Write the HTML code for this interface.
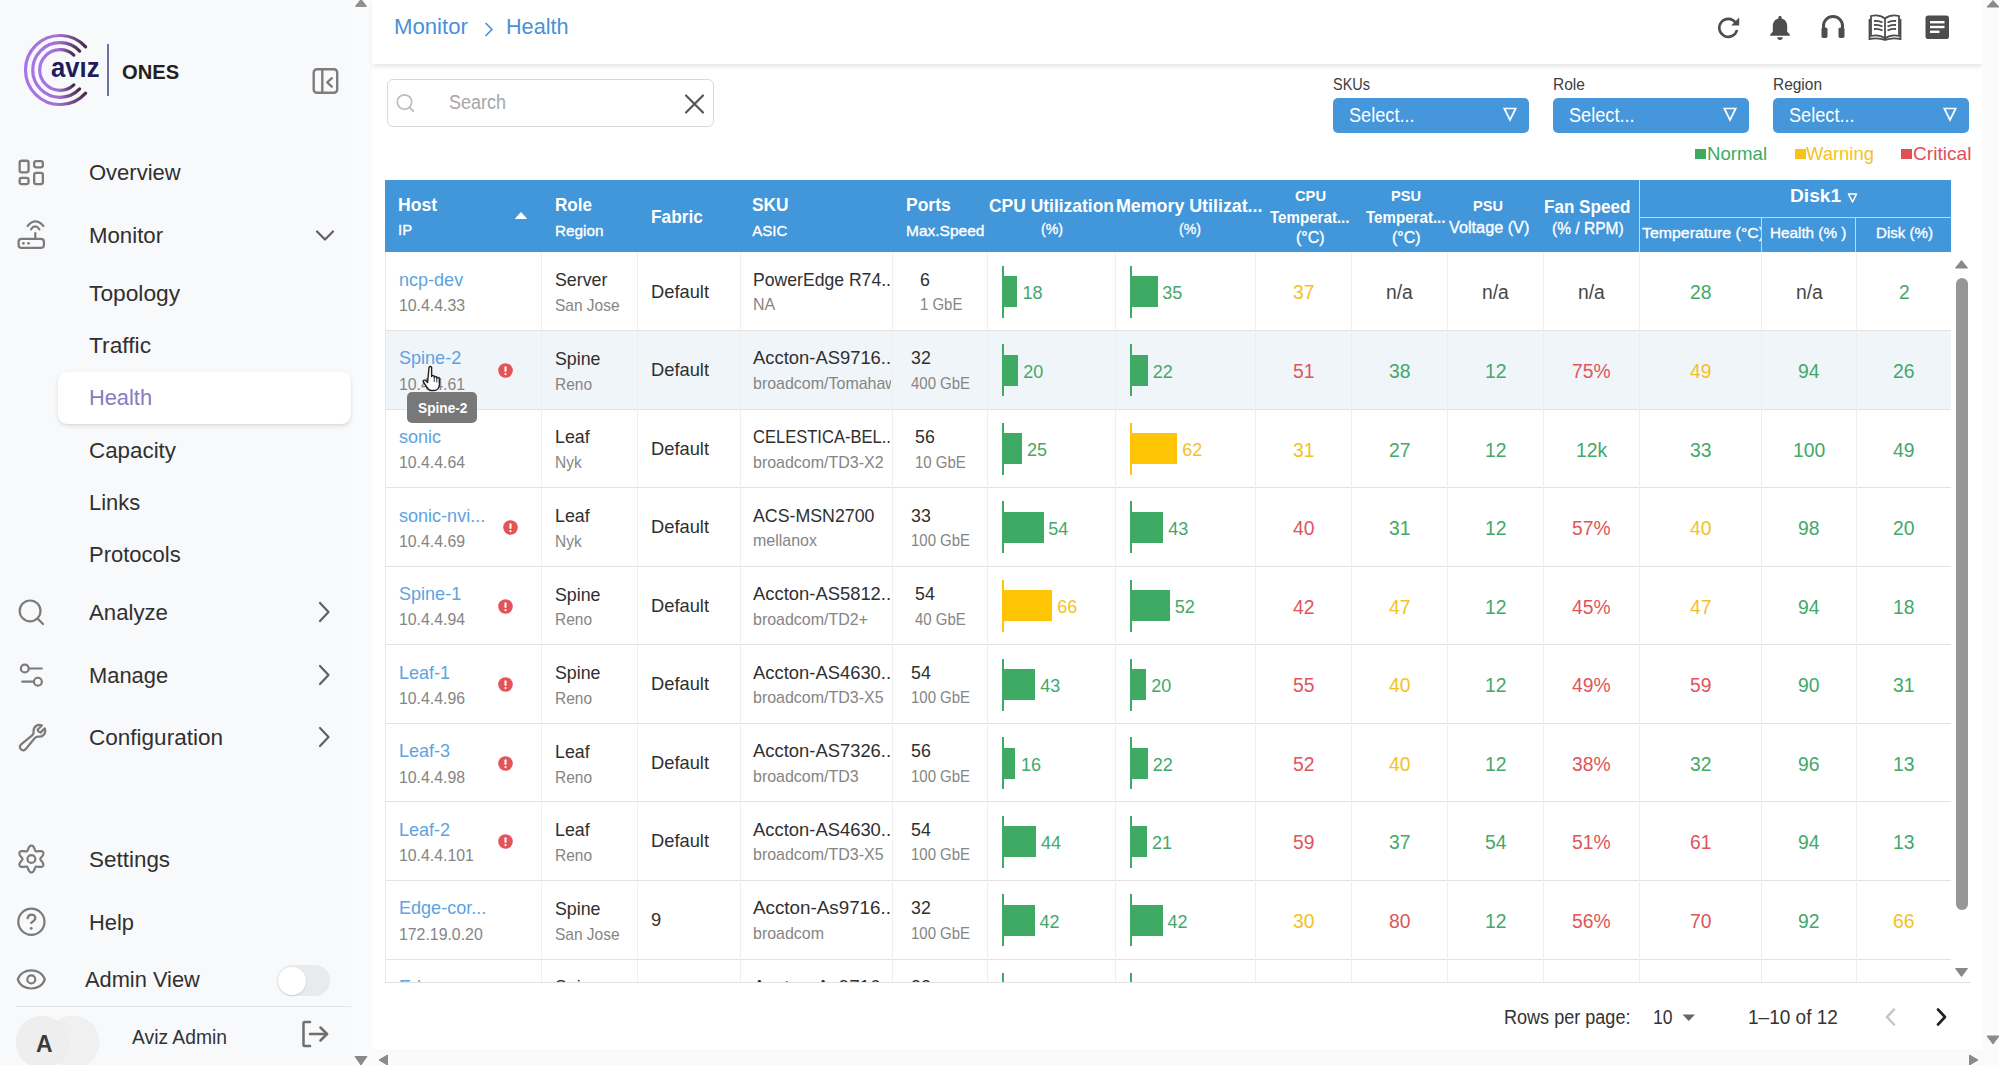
<!DOCTYPE html><html><head><meta charset="utf-8"><style>
html,body{margin:0;padding:0;}
body{width:1999px;height:1065px;overflow:hidden;position:relative;background:#fff;font-family:"Liberation Sans",sans-serif;}
.a{position:absolute;}
.t{position:absolute;white-space:nowrap;}
</style></head><body>
<div class="a" style="left:0px;top:0px;width:353px;height:1065px;background:#f8f9fb;"></div>
<div class="a" style="left:353px;top:0px;width:19px;height:1065px;background:#fafbfc;"></div>
<svg class="a" style="left:354px;top:-1px" width="14" height="9" viewBox="0 0 14 9"><path d="M2 7.2 L7 1 L12 7.2 Z" fill="#8f8f8f" stroke="#8f8f8f" stroke-linejoin="round" stroke-width="1.6"/></svg>
<svg class="a" style="left:354px;top:1056px" width="14" height="9" viewBox="0 0 14 9"><path d="M1 0.5 L13 0.5 L7 9 Z" fill="#8a8a8a" stroke="#8a8a8a" stroke-linejoin="round" stroke-width="1"/></svg>
<svg class="a" style="left:0px;top:0px" width="120" height="120" viewBox="0 0 120 120"><defs><linearGradient id="lg" x1="0" y1="0" x2="1" y2="0"><stop offset="0" stop-color="#a874e8"/><stop offset="0.55" stop-color="#a070d0"/><stop offset="1" stop-color="#4a2a48"/></linearGradient></defs><path d="M85.64 46.91 A34.5 34.5 0 1 0 85.64 93.09" fill="none" stroke="url(#lg)" stroke-width="3.2" stroke-linecap="round"/><path d="M79.64 51.04 A27.3 27.3 0 1 0 79.64 88.96" fill="none" stroke="url(#lg)" stroke-width="3.2" stroke-linecap="round"/><path d="M73.84 55.15 A20.3 20.3 0 1 0 73.84 84.85" fill="none" stroke="url(#lg)" stroke-width="3.2" stroke-linecap="round"/></svg>
<div class="t " style="left:50.50px;top:55.34px;font-size:27px;line-height:27px;color:#1f1b5c;font-weight:700;transform:scaleX(0.9504);transform-origin:0 0;">av&#305;z</div>
<div class="a" style="left:107px;top:44px;width:2px;height:52px;background:#6b72a8;"></div>
<div class="t " style="left:122.00px;top:62.07px;font-size:20px;line-height:20px;color:#231f20;font-weight:700;transform:scaleX(1.0071);transform-origin:0 0;">ONES</div>
<svg class="a" style="left:310px;top:66px" width="30" height="31" viewBox="0 0 30 31"><rect x="3.7" y="3.2" width="23.5" height="23.6" rx="3.2" fill="none" stroke="#7d7d7d" stroke-width="2.4"/><line x1="12.3" y1="3.2" x2="12.3" y2="26.8" stroke="#7d7d7d" stroke-width="2.4"/><path d="M21.8 12.2 L17.2 16.3 L21.8 20.6" fill="none" stroke="#7d7d7d" stroke-width="2.3" stroke-linecap="round" stroke-linejoin="round"/></svg>
<svg class="a" style="left:10px;top:150px" width="50" height="50" viewBox="0 0 50 50"><g fill="none" stroke="#7b7b7b" stroke-width="2.3"><rect x="9.65" y="10.75" width="8.9" height="11.6" rx="2"/><rect x="24.15" y="11.05" width="8.7" height="6.3" rx="2"/><rect x="9.65" y="27.95" width="8.9" height="6.1" rx="2"/><rect x="24.15" y="22.95" width="8.7" height="11.1" rx="2"/></g></svg>
<div class="t " style="left:89.00px;top:162.08px;font-size:22px;line-height:22px;color:#303030;">Overview</div>
<svg class="a" style="left:10px;top:210px" width="50" height="50" viewBox="0 0 50 50"><g fill="none" stroke="#7b7b7b" stroke-width="2.2" stroke-linecap="round"><rect x="8.6" y="28.8" width="25.3" height="9.1" rx="3"/><line x1="25.3" y1="23" x2="25.3" y2="28.5"/><path d="M17.6 16 Q25.4 6.8 33.4 16"/><path d="M21 19.3 Q25.2 13.6 29.4 19.3"/></g><circle cx="13.4" cy="33.3" r="1.4" fill="#7b7b7b"/><circle cx="18.5" cy="33.3" r="1.4" fill="#7b7b7b"/></svg>
<div class="t " style="left:89.00px;top:225.08px;font-size:22px;line-height:22px;color:#303030;transform:scaleX(1.0101);transform-origin:0 0;">Monitor</div>
<svg class="a" style="left:314px;top:227px" width="22" height="18" viewBox="0 0 22 18"><path d="M3 4.5 L11 12.5 L19 4.5" fill="none" stroke="#606060" stroke-width="2.2" stroke-linecap="round" stroke-linejoin="round"/></svg>
<div class="a" style="left:58px;top:372px;width:293px;height:52px;background:#fff;border-radius:9px;box-shadow:0 2px 4px rgba(0,0,0,0.10),0 1px 2px rgba(0,0,0,0.05);"></div>
<div class="t " style="left:89.00px;top:283.08px;font-size:22px;line-height:22px;color:#303030;transform:scaleX(1.0341);transform-origin:0 0;">Topology</div>
<div class="t " style="left:89.00px;top:335.28px;font-size:22px;line-height:22px;color:#303030;transform:scaleX(1.0361);transform-origin:0 0;">Traffic</div>
<div class="t " style="left:89.00px;top:387.48px;font-size:22px;line-height:22px;color:#857cc0;transform:scaleX(0.9909);transform-origin:0 0;">Health</div>
<div class="t " style="left:89.00px;top:440.08px;font-size:22px;line-height:22px;color:#303030;transform:scaleX(1.0166);transform-origin:0 0;">Capacity</div>
<div class="t " style="left:89.00px;top:491.68px;font-size:22px;line-height:22px;color:#303030;transform:scaleX(0.9949);transform-origin:0 0;">Links</div>
<div class="t " style="left:89.00px;top:543.78px;font-size:22px;line-height:22px;color:#303030;">Protocols</div>
<svg class="a" style="left:10px;top:590px" width="50" height="50" viewBox="0 0 50 50"><g fill="none" stroke="#7b7b7b" stroke-width="2.2" stroke-linecap="round"><circle cx="20.1" cy="20.9" r="10.4"/><line x1="28" y1="28.9" x2="33" y2="34"/></g></svg>
<div class="t " style="left:89.00px;top:602.18px;font-size:22px;line-height:22px;color:#303030;transform:scaleX(1.0087);transform-origin:0 0;">Analyze</div>
<svg class="a" style="left:315px;top:600px" width="20" height="24" viewBox="0 0 20 24"><path d="M5 3 L13.5 12 L5 21" fill="none" stroke="#606060" stroke-width="2.2" stroke-linecap="round" stroke-linejoin="round"/></svg>
<svg class="a" style="left:10px;top:650px" width="50" height="50" viewBox="0 0 50 50"><g fill="none" stroke="#7b7b7b" stroke-width="2.2" stroke-linecap="round"><circle cx="14.8" cy="18.5" r="3.95"/><line x1="18.75" y1="18.5" x2="31.8" y2="18.5"/><circle cx="27.9" cy="31.7" r="3.95"/><line x1="12.2" y1="31.7" x2="23.95" y2="31.7"/></g></svg>
<div class="t " style="left:89.00px;top:664.78px;font-size:22px;line-height:22px;color:#303030;transform:scaleX(0.9947);transform-origin:0 0;">Manage</div>
<svg class="a" style="left:315px;top:663px" width="20" height="24" viewBox="0 0 20 24"><path d="M5 3 L13.5 12 L5 21" fill="none" stroke="#606060" stroke-width="2.2" stroke-linecap="round" stroke-linejoin="round"/></svg>
<svg class="a" style="left:16.7px;top:721.5px" width="32" height="32" viewBox="0 0 32 32"><g transform="scale(1.3)"><path d="M21.75 6.75a4.5 4.5 0 0 1-4.884 4.484c-1.076-.091-2.264.071-2.95.904l-7.152 8.684a2.548 2.548 0 1 1-3.586-3.586l8.684-7.152c.833-.686.995-1.874.904-2.95a4.5 4.5 0 0 1 6.336-4.486l-3.276 3.276a3.004 3.004 0 0 0 2.25 2.25l3.276-3.276c.211.465.329.98.329 1.521Z" fill="none" stroke="#7b7b7b" stroke-width="1.7" stroke-linejoin="round" stroke-linecap="round"/></g></svg>
<div class="t " style="left:89.00px;top:727.28px;font-size:22px;line-height:22px;color:#303030;transform:scaleX(1.0237);transform-origin:0 0;">Configuration</div>
<svg class="a" style="left:315px;top:725px" width="20" height="24" viewBox="0 0 20 24"><path d="M5 3 L13.5 12 L5 21" fill="none" stroke="#606060" stroke-width="2.2" stroke-linecap="round" stroke-linejoin="round"/></svg>
<svg class="a" style="left:10px;top:834px" width="50" height="50" viewBox="0 0 50 50"><path d="M21.40 11.50 L21.64 11.51 L21.87 11.56 L22.10 11.63 L22.33 11.73 L22.55 11.86 L22.77 12.01 L22.97 12.19 L23.17 12.38 L23.36 12.60 L23.54 12.84 L23.72 13.09 L23.88 13.35 L24.03 13.62 L24.17 13.90 L24.30 14.18 L24.42 14.46 L24.53 14.75 L24.64 15.02 L24.74 15.29 L24.84 15.56 L24.93 15.81 L25.02 16.04 L25.11 16.26 L25.20 16.47 L25.29 16.65 L25.39 16.82 L25.49 16.97 L25.60 17.10 L25.72 17.20 L25.85 17.29 L25.99 17.36 L26.14 17.41 L26.31 17.44 L26.49 17.46 L26.68 17.46 L26.89 17.44 L27.11 17.42 L27.35 17.39 L27.60 17.35 L27.86 17.30 L28.13 17.25 L28.42 17.20 L28.71 17.16 L29.01 17.12 L29.32 17.08 L29.63 17.05 L29.94 17.04 L30.25 17.03 L30.56 17.04 L30.86 17.06 L31.15 17.10 L31.44 17.16 L31.71 17.23 L31.97 17.32 L32.21 17.43 L32.43 17.56 L32.63 17.71 L32.81 17.87 L32.96 18.05 L33.09 18.25 L33.20 18.46 L33.28 18.69 L33.33 18.92 L33.35 19.17 L33.36 19.42 L33.33 19.69 L33.28 19.96 L33.21 20.23 L33.12 20.50 L33.01 20.78 L32.87 21.05 L32.73 21.32 L32.57 21.59 L32.40 21.85 L32.22 22.10 L32.03 22.35 L31.85 22.59 L31.66 22.82 L31.48 23.04 L31.30 23.25 L31.13 23.46 L30.97 23.66 L30.82 23.84 L30.69 24.02 L30.57 24.20 L30.48 24.37 L30.40 24.53 L30.34 24.69 L30.31 24.84 L30.30 25.00 L30.31 25.16 L30.34 25.31 L30.40 25.47 L30.48 25.63 L30.57 25.80 L30.69 25.98 L30.82 26.16 L30.97 26.34 L31.13 26.54 L31.30 26.75 L31.48 26.96 L31.66 27.18 L31.85 27.41 L32.03 27.65 L32.22 27.90 L32.40 28.15 L32.57 28.41 L32.73 28.68 L32.87 28.95 L33.01 29.22 L33.12 29.50 L33.21 29.77 L33.28 30.04 L33.33 30.31 L33.36 30.58 L33.35 30.83 L33.33 31.08 L33.28 31.31 L33.20 31.54 L33.09 31.75 L32.96 31.95 L32.81 32.13 L32.63 32.29 L32.43 32.44 L32.21 32.57 L31.97 32.68 L31.71 32.77 L31.44 32.84 L31.15 32.90 L30.86 32.94 L30.56 32.96 L30.25 32.97 L29.94 32.96 L29.63 32.95 L29.32 32.92 L29.01 32.88 L28.71 32.84 L28.42 32.80 L28.13 32.75 L27.86 32.70 L27.60 32.65 L27.35 32.61 L27.11 32.58 L26.89 32.56 L26.68 32.54 L26.49 32.54 L26.31 32.56 L26.14 32.59 L25.99 32.64 L25.85 32.71 L25.72 32.80 L25.60 32.90 L25.49 33.03 L25.39 33.18 L25.29 33.35 L25.20 33.53 L25.11 33.74 L25.02 33.96 L24.93 34.19 L24.84 34.44 L24.74 34.71 L24.64 34.98 L24.53 35.25 L24.42 35.54 L24.30 35.82 L24.17 36.10 L24.03 36.38 L23.88 36.65 L23.72 36.91 L23.54 37.16 L23.36 37.40 L23.17 37.62 L22.97 37.81 L22.77 37.99 L22.55 38.14 L22.33 38.27 L22.10 38.37 L21.87 38.44 L21.64 38.49 L21.40 38.50 L21.16 38.49 L20.93 38.44 L20.70 38.37 L20.47 38.27 L20.25 38.14 L20.03 37.99 L19.83 37.81 L19.63 37.62 L19.44 37.40 L19.26 37.16 L19.08 36.91 L18.92 36.65 L18.77 36.38 L18.63 36.10 L18.50 35.82 L18.38 35.54 L18.27 35.25 L18.16 34.98 L18.06 34.71 L17.96 34.44 L17.87 34.19 L17.78 33.96 L17.69 33.74 L17.60 33.53 L17.51 33.35 L17.41 33.18 L17.31 33.03 L17.20 32.90 L17.08 32.80 L16.95 32.71 L16.81 32.64 L16.66 32.59 L16.49 32.56 L16.31 32.54 L16.12 32.54 L15.91 32.56 L15.69 32.58 L15.45 32.61 L15.20 32.65 L14.94 32.70 L14.67 32.75 L14.38 32.80 L14.09 32.84 L13.79 32.88 L13.48 32.92 L13.17 32.95 L12.86 32.96 L12.55 32.97 L12.24 32.96 L11.94 32.94 L11.65 32.90 L11.36 32.84 L11.09 32.77 L10.83 32.68 L10.59 32.57 L10.37 32.44 L10.17 32.29 L9.99 32.13 L9.84 31.95 L9.71 31.75 L9.60 31.54 L9.52 31.31 L9.47 31.08 L9.45 30.83 L9.44 30.58 L9.47 30.31 L9.52 30.04 L9.59 29.77 L9.68 29.50 L9.79 29.22 L9.93 28.95 L10.07 28.68 L10.23 28.41 L10.40 28.15 L10.58 27.90 L10.77 27.65 L10.95 27.41 L11.14 27.18 L11.32 26.96 L11.50 26.75 L11.67 26.54 L11.83 26.34 L11.98 26.16 L12.11 25.98 L12.23 25.80 L12.32 25.63 L12.40 25.47 L12.46 25.31 L12.49 25.16 L12.50 25.00 L12.49 24.84 L12.46 24.69 L12.40 24.53 L12.32 24.37 L12.23 24.20 L12.11 24.02 L11.98 23.84 L11.83 23.66 L11.67 23.46 L11.50 23.25 L11.32 23.04 L11.14 22.82 L10.95 22.59 L10.77 22.35 L10.58 22.10 L10.40 21.85 L10.23 21.59 L10.07 21.32 L9.93 21.05 L9.79 20.78 L9.68 20.50 L9.59 20.23 L9.52 19.96 L9.47 19.69 L9.44 19.42 L9.45 19.17 L9.47 18.92 L9.52 18.69 L9.60 18.46 L9.71 18.25 L9.84 18.05 L9.99 17.87 L10.17 17.71 L10.37 17.56 L10.59 17.43 L10.83 17.32 L11.09 17.23 L11.36 17.16 L11.65 17.10 L11.94 17.06 L12.24 17.04 L12.55 17.03 L12.86 17.04 L13.17 17.05 L13.48 17.08 L13.79 17.12 L14.09 17.16 L14.38 17.20 L14.67 17.25 L14.94 17.30 L15.20 17.35 L15.45 17.39 L15.69 17.42 L15.91 17.44 L16.12 17.46 L16.31 17.46 L16.49 17.44 L16.66 17.41 L16.81 17.36 L16.95 17.29 L17.08 17.20 L17.20 17.10 L17.31 16.97 L17.41 16.82 L17.51 16.65 L17.60 16.47 L17.69 16.26 L17.78 16.04 L17.87 15.81 L17.96 15.56 L18.06 15.29 L18.16 15.02 L18.27 14.75 L18.38 14.46 L18.50 14.18 L18.63 13.90 L18.77 13.62 L18.92 13.35 L19.08 13.09 L19.26 12.84 L19.44 12.60 L19.63 12.38 L19.83 12.19 L20.03 12.01 L20.25 11.86 L20.47 11.73 L20.70 11.63 L20.93 11.56 L21.16 11.51 L21.40 11.50 Z" fill="none" stroke="#7b7b7b" stroke-width="2.2" stroke-linejoin="round"/><circle cx="21.4" cy="25" r="3.95" fill="none" stroke="#7b7b7b" stroke-width="2.2"/></svg>
<div class="t " style="left:89.00px;top:849.08px;font-size:22px;line-height:22px;color:#303030;transform:scaleX(1.0199);transform-origin:0 0;">Settings</div>
<svg class="a" style="left:10px;top:896px" width="50" height="50" viewBox="0 0 50 50"><circle cx="21.4" cy="25.8" r="13.1" fill="none" stroke="#7b7b7b" stroke-width="2.2"/><path d="M17.6 22.2 C18.2 19.6 20 18.6 21.5 18.6 C23.7 18.6 25.3 20.2 25.3 22.1 C25.3 24.3 23.4 25.5 21.2 26.9" fill="none" stroke="#7b7b7b" stroke-width="2.3" stroke-linecap="round"/><circle cx="21.2" cy="32.4" r="1.45" fill="#7b7b7b"/></svg>
<div class="t " style="left:89.00px;top:911.98px;font-size:22px;line-height:22px;color:#303030;transform:scaleX(0.9929);transform-origin:0 0;">Help</div>
<svg class="a" style="left:10px;top:955px" width="50" height="50" viewBox="0 0 50 50"><path d="M7.8 24.4 C11.5 12.3 31.1 12.3 34.8 24.4 C31.1 36.5 11.5 36.5 7.8 24.4 Z" fill="none" stroke="#7b7b7b" stroke-width="2.2" stroke-linejoin="round"/><circle cx="21.3" cy="24.4" r="3.95" fill="none" stroke="#7b7b7b" stroke-width="2.2"/></svg>
<div class="t " style="left:84.50px;top:969.08px;font-size:22px;line-height:22px;color:#303030;transform:scaleX(0.9919);transform-origin:0 0;">Admin View</div>
<div class="a" style="left:277px;top:965px;width:53px;height:31px;background:#e9eaec;border-radius:16px;"></div>
<div class="a" style="left:278px;top:966.5px;width:28px;height:28px;background:#fff;border-radius:50%;box-shadow:0 1px 2px rgba(0,0,0,0.14);"></div>
<div class="a" style="left:16px;top:1006px;width:335px;height:1px;background:#e3e4e6;"></div>
<div class="a" style="left:47px;top:1016px;width:52px;height:52px;background:#f0f0f1;border-radius:50%;box-shadow:0 0 1px rgba(0,0,0,0.08);"></div>
<div class="a" style="left:16px;top:1016px;width:52px;height:52px;background:#eeeeef;border-radius:50%;box-shadow:0 0 1px rgba(0,0,0,0.08);"></div>
<div class="t " style="left:35.50px;top:1033.03px;font-size:23px;line-height:23px;color:#3a3a3a;font-weight:700;transform:scaleX(0.9964);transform-origin:0 0;">A</div>
<div class="t " style="left:131.50px;top:1027.07px;font-size:20px;line-height:20px;color:#333;transform:scaleX(0.9635);transform-origin:0 0;">Aviz Admin</div>
<svg class="a" style="left:300px;top:1019px" width="32" height="30" viewBox="0 0 32 30"><g fill="none" stroke="#6f6f6f" stroke-width="2.5" stroke-linecap="round" stroke-linejoin="round"><path d="M10 3 H4.5 Q3.5 3 3.5 4 V26 Q3.5 27 4.5 27 H10"/><line x1="10" y1="15" x2="27" y2="15"/><path d="M20.5 8.5 L27 15 L20.5 21.5"/></g></svg>
<div class="a" style="left:372px;top:0px;width:1611px;height:1065px;background:#fff;"></div>
<div class="a" style="left:372px;top:0px;width:1611px;height:64px;background:#fff;box-shadow:0 3px 5px -1px rgba(0,0,0,0.12);"></div>
<div class="t " style="left:393.70px;top:15.98px;font-size:22px;line-height:22px;color:#4a91d6;transform:scaleX(1.0074);transform-origin:0 0;">Monitor</div>
<svg class="a" style="left:482px;top:21px" width="14" height="16" viewBox="0 0 14 16"><path d="M4 2.5 L10 8.5 L4 14.5" fill="none" stroke="#4a91d6" stroke-width="1.7" stroke-linecap="round" stroke-linejoin="round"/></svg>
<div class="t " style="left:506.20px;top:15.98px;font-size:22px;line-height:22px;color:#4a91d6;transform:scaleX(0.9830);transform-origin:0 0;">Health</div>
<svg class="a" style="left:1715px;top:14px" width="28" height="26" viewBox="0 0 28 26"><path d="M20.5 8.5 A9 9 0 1 0 22 16" fill="none" stroke="#4d4d4d" stroke-width="2.6"/><path d="M24.2 3.5 V11.5 H16.2 Z" fill="#4d4d4d"/></svg>
<svg class="a" style="left:1768px;top:14px" width="24" height="27" viewBox="0 0 24 27"><path d="M12 2 c1 0 1.6 .7 1.6 1.6 v.8 c3.6 .9 5.6 4 5.6 7.6 v5.8 l2.6 2.6 v1.3 H2.2 v-1.3 l2.6 -2.6 v-5.8 c0 -3.6 2 -6.7 5.6 -7.6 v-.8 C10.4 2.7 11 2 12 2 Z M9.3 23.3 h5.4 a2.7 2.7 0 0 1 -5.4 0 Z" fill="#4d4d4d"/></svg>
<svg class="a" style="left:1819px;top:12px" width="28" height="28" viewBox="0 0 28 28"><path d="M4.5 18 V14 a9.5 9.5 0 0 1 19 0 V18" fill="none" stroke="#4d4d4d" stroke-width="3"/><rect x="2.5" y="15.5" width="6" height="10.5" rx="1.8" fill="#4d4d4d"/><rect x="19.5" y="15.5" width="6" height="10.5" rx="1.8" fill="#4d4d4d"/></svg>
<svg class="a" style="left:1867px;top:13px" width="36" height="28" viewBox="0 0 36 28"><g fill="none" stroke="#4d4d4d" stroke-width="1.8"><path d="M18 5.5 C14 2.5 8 2 4 3 V23 C8 22 14 22.5 18 25.5 C22 22.5 28 22 32 23 V3 C28 2 22 2.5 18 5.5 Z"/><path d="M18 5.5 V25.5"/><path d="M2.5 6 V26 C8 25 14 25.5 18 27 C22 25.5 28 25 33.5 26 V6"/><path d="M7 8 C10 7.5 13 8 15.5 9.5 M7 12 C10 11.5 13 12 15.5 13.5 M7 16 C10 15.5 13 16 15.5 17.5 M20.5 9.5 C23 8 26 7.5 29 8 M20.5 13.5 C23 12 26 11.5 29 12 M20.5 17.5 C23 16 26 15.5 29 16"/></g></svg>
<svg class="a" style="left:1924px;top:14px" width="27" height="26" viewBox="0 0 27 26"><rect x="1.5" y="1.5" width="23.5" height="23.5" rx="2.8" fill="#4d4d4d"/><rect x="6" y="7" width="14.5" height="2.4" fill="#fff"/><rect x="6" y="11.8" width="14.5" height="2.4" fill="#fff"/><rect x="6" y="16.6" width="9.5" height="2.4" fill="#fff"/></svg>
<div class="a" style="left:387px;top:79px;width:327px;height:48px;box-sizing:border-box;border:1.3px solid #d9d9d9;border-radius:6px;background:#fff;"></div>
<svg class="a" style="left:394px;top:92px" width="22" height="22" viewBox="0 0 22 22"><circle cx="10.5" cy="10" r="7.2" fill="none" stroke="#bdbdbd" stroke-width="1.7"/><line x1="15.6" y1="15.3" x2="19.3" y2="19" stroke="#bdbdbd" stroke-width="1.8" stroke-linecap="round"/></svg>
<div class="t " style="left:448.50px;top:91.77px;font-size:20px;line-height:20px;color:#a6a6a6;transform:scaleX(0.8991);transform-origin:0 0;">Search</div>
<svg class="a" style="left:683px;top:93px" width="23" height="22" viewBox="0 0 23 22"><path d="M3 2.5 L20 19.5 M20 2.5 L3 19.5" stroke="#555" stroke-width="2.2" stroke-linecap="round"/></svg>
<div class="t " style="left:1333.00px;top:76.66px;font-size:16px;line-height:16px;color:#3d3d3d;transform:scaleX(0.9033);transform-origin:0 0;">SKUs</div>
<div class="a" style="left:1333px;top:98px;width:196px;height:35px;background:#4596db;border-radius:5px;"></div>
<div class="t " style="left:1349.00px;top:105.47px;font-size:20px;line-height:20px;color:#fff;transform:scaleX(0.9072);transform-origin:0 0;">Select...</div>
<svg class="a" style="left:1502px;top:106px" width="16" height="16" viewBox="0 0 16 16"><path d="M2.3 2.5 L13.7 2.5 L8 14 Z" fill="none" stroke="#fff" stroke-width="1.7" stroke-linejoin="miter"/></svg>
<div class="t " style="left:1552.50px;top:76.66px;font-size:16px;line-height:16px;color:#3d3d3d;transform:scaleX(0.9709);transform-origin:0 0;">Role</div>
<div class="a" style="left:1553px;top:98px;width:196px;height:35px;background:#4596db;border-radius:5px;"></div>
<div class="t " style="left:1569.00px;top:105.47px;font-size:20px;line-height:20px;color:#fff;transform:scaleX(0.9072);transform-origin:0 0;">Select...</div>
<svg class="a" style="left:1722px;top:106px" width="16" height="16" viewBox="0 0 16 16"><path d="M2.3 2.5 L13.7 2.5 L8 14 Z" fill="none" stroke="#fff" stroke-width="1.7" stroke-linejoin="miter"/></svg>
<div class="t " style="left:1772.50px;top:76.66px;font-size:16px;line-height:16px;color:#3d3d3d;transform:scaleX(0.9661);transform-origin:0 0;">Region</div>
<div class="a" style="left:1773px;top:98px;width:196px;height:35px;background:#4596db;border-radius:5px;"></div>
<div class="t " style="left:1789.00px;top:105.47px;font-size:20px;line-height:20px;color:#fff;transform:scaleX(0.9072);transform-origin:0 0;">Select...</div>
<svg class="a" style="left:1942px;top:106px" width="16" height="16" viewBox="0 0 16 16"><path d="M2.3 2.5 L13.7 2.5 L8 14 Z" fill="none" stroke="#fff" stroke-width="1.7" stroke-linejoin="miter"/></svg>
<div class="a" style="left:1695px;top:148.5px;width:10.5px;height:10.5px;background:#3daa62;"></div>
<div class="t " style="left:1707.00px;top:143.92px;font-size:19px;line-height:19px;color:#3daa62;transform:scaleX(0.9807);transform-origin:0 0;">Normal</div>
<div class="a" style="left:1795px;top:148.5px;width:10.5px;height:10.5px;background:#f6c21c;"></div>
<div class="t " style="left:1806.00px;top:143.92px;font-size:19px;line-height:19px;color:#f6c21c;transform:scaleX(0.9699);transform-origin:0 0;">Warning</div>
<div class="a" style="left:1901px;top:148.5px;width:10.5px;height:10.5px;background:#e14f56;"></div>
<div class="t " style="left:1912.50px;top:143.92px;font-size:19px;line-height:19px;color:#e14f56;transform:scaleX(1.0062);transform-origin:0 0;">Critical</div>
<div class="a" style="left:385px;top:252px;width:1586px;height:730px;overflow:hidden;background:#fff;">
<div class="a" style="left:0px;top:78px;width:1566px;height:1px;background:#e3e3e3;"></div>
<div class="a" style="left:156px;top:0.0px;width:1px;height:78.56px;background:#efefef;"></div>
<div class="a" style="left:252px;top:0.0px;width:1px;height:78.56px;background:#efefef;"></div>
<div class="a" style="left:355px;top:0.0px;width:1px;height:78.56px;background:#efefef;"></div>
<div class="a" style="left:507px;top:0.0px;width:1px;height:78.56px;background:#efefef;"></div>
<div class="a" style="left:602px;top:0.0px;width:1px;height:78.56px;background:#efefef;"></div>
<div class="a" style="left:730px;top:0.0px;width:1px;height:78.56px;background:#efefef;"></div>
<div class="a" style="left:870px;top:0.0px;width:1px;height:78.56px;background:#efefef;"></div>
<div class="a" style="left:966px;top:0.0px;width:1px;height:78.56px;background:#efefef;"></div>
<div class="a" style="left:1061.5px;top:0.0px;width:1px;height:78.56px;background:#efefef;"></div>
<div class="a" style="left:1158px;top:0.0px;width:1px;height:78.56px;background:#efefef;"></div>
<div class="a" style="left:1253.5px;top:0.0px;width:1px;height:78.56px;background:#efefef;"></div>
<div class="a" style="left:1376px;top:0.0px;width:1px;height:78.56px;background:#efefef;"></div>
<div class="a" style="left:1470.5px;top:0.0px;width:1px;height:78.56px;background:#efefef;"></div>
<div class="t " style="left:13.60px;top:18.84px;font-size:18.5px;line-height:18.5px;color:#5ca3e3;transform:scaleX(0.9750);transform-origin:0 0;">ncp-dev</div>
<div class="t " style="left:14.30px;top:45.21px;font-size:17px;line-height:17px;color:#858585;transform:scaleX(0.9320);transform-origin:0 0;">10.4.4.33</div>
<div class="t " style="left:169.80px;top:19.34px;font-size:18.5px;line-height:18.5px;color:#2f2f2f;transform:scaleX(0.9620);transform-origin:0 0;">Server</div>
<div class="t " style="left:169.80px;top:45.21px;font-size:17px;line-height:17px;color:#858585;transform:scaleX(0.9100);transform-origin:0 0;">San Jose</div>
<div class="t " style="left:266.00px;top:30.54px;font-size:18.5px;line-height:18.5px;color:#2f2f2f;transform:scaleX(0.9900);transform-origin:0 0;">Default</div>
<div class="a" style="left:367px;top:0.00px;width:139px;height:78.56px;overflow:hidden;">
<div class="t " style="left:0.80px;top:18.84px;font-size:18.5px;line-height:18.5px;color:#2f2f2f;transform:scaleX(0.9515);transform-origin:0 0;">PowerEdge R74..</div>
<div class="t " style="left:0.80px;top:44.41px;font-size:17px;line-height:17px;color:#858585;transform:scaleX(0.9400);transform-origin:0 0;">NA</div>
</div>
<div class="t " style="left:534.63px;top:18.84px;font-size:18.5px;line-height:18.5px;color:#2f2f2f;transform:scaleX(0.9600);transform-origin:0 0;">6</div>
<div class="t " style="left:534.63px;top:44.41px;font-size:17px;line-height:17px;color:#858585;transform:scaleX(0.8800);transform-origin:0 0;">1 GbE</div>
<div class="a" style="left:616.6px;top:13.8px;width:2px;height:52px;background:#3faa64;"></div>
<div class="a" style="left:616.6px;top:24.2px;width:15.4px;height:31px;background:#3faa64;"></div>
<div class="t " style="left:637.50px;top:32.16px;font-size:18px;line-height:18px;color:#43a869;">18</div>
<div class="a" style="left:744.6px;top:13.8px;width:2px;height:52px;background:#3faa64;"></div>
<div class="a" style="left:744.6px;top:24.2px;width:28.0px;height:31px;background:#3faa64;"></div>
<div class="t " style="left:777.30px;top:32.16px;font-size:18px;line-height:18px;color:#43a869;">35</div>
<div class="t " style="left:908.09px;top:31.49px;font-size:19.5px;line-height:19.5px;color:#f4c125;transform:scaleX(0.9900);transform-origin:0 0;">37</div>
<div class="t " style="left:1001.13px;top:31.49px;font-size:19.5px;line-height:19.5px;color:#474747;transform:scaleX(0.9900);transform-origin:0 0;">n/a</div>
<div class="t " style="left:1097.13px;top:31.49px;font-size:19.5px;line-height:19.5px;color:#474747;transform:scaleX(0.9900);transform-origin:0 0;">n/a</div>
<div class="t " style="left:1193.13px;top:31.49px;font-size:19.5px;line-height:19.5px;color:#474747;transform:scaleX(0.9900);transform-origin:0 0;">n/a</div>
<div class="t " style="left:1304.84px;top:31.49px;font-size:19.5px;line-height:19.5px;color:#43a869;transform:scaleX(0.9900);transform-origin:0 0;">28</div>
<div class="t " style="left:1410.63px;top:31.49px;font-size:19.5px;line-height:19.5px;color:#474747;transform:scaleX(0.9900);transform-origin:0 0;">n/a</div>
<div class="t " style="left:1513.64px;top:31.49px;font-size:19.5px;line-height:19.5px;color:#43a869;transform:scaleX(0.9900);transform-origin:0 0;">2</div>
<div class="a" style="left:0px;top:78.56px;width:1566px;height:78.56px;background:#f0f5fa;"></div>
<div class="a" style="left:0px;top:157px;width:1566px;height:1px;background:#e3e3e3;"></div>
<div class="a" style="left:156px;top:78.56px;width:1px;height:78.56px;background:#efefef;"></div>
<div class="a" style="left:252px;top:78.56px;width:1px;height:78.56px;background:#efefef;"></div>
<div class="a" style="left:355px;top:78.56px;width:1px;height:78.56px;background:#efefef;"></div>
<div class="a" style="left:507px;top:78.56px;width:1px;height:78.56px;background:#efefef;"></div>
<div class="a" style="left:602px;top:78.56px;width:1px;height:78.56px;background:#efefef;"></div>
<div class="a" style="left:730px;top:78.56px;width:1px;height:78.56px;background:#efefef;"></div>
<div class="a" style="left:870px;top:78.56px;width:1px;height:78.56px;background:#efefef;"></div>
<div class="a" style="left:966px;top:78.56px;width:1px;height:78.56px;background:#efefef;"></div>
<div class="a" style="left:1061.5px;top:78.56px;width:1px;height:78.56px;background:#efefef;"></div>
<div class="a" style="left:1158px;top:78.56px;width:1px;height:78.56px;background:#efefef;"></div>
<div class="a" style="left:1253.5px;top:78.56px;width:1px;height:78.56px;background:#efefef;"></div>
<div class="a" style="left:1376px;top:78.56px;width:1px;height:78.56px;background:#efefef;"></div>
<div class="a" style="left:1470.5px;top:78.56px;width:1px;height:78.56px;background:#efefef;"></div>
<div class="t " style="left:13.60px;top:97.40px;font-size:18.5px;line-height:18.5px;color:#5ca3e3;transform:scaleX(0.9750);transform-origin:0 0;">Spine-2</div>
<div class="t " style="left:14.30px;top:123.77px;font-size:17px;line-height:17px;color:#858585;transform:scaleX(0.9320);transform-origin:0 0;">10.4.4.61</div>
<div class="t " style="left:169.80px;top:97.90px;font-size:18.5px;line-height:18.5px;color:#2f2f2f;transform:scaleX(0.9620);transform-origin:0 0;">Spine</div>
<div class="t " style="left:169.80px;top:123.77px;font-size:17px;line-height:17px;color:#858585;transform:scaleX(0.9100);transform-origin:0 0;">Reno</div>
<div class="t " style="left:266.00px;top:109.10px;font-size:18.5px;line-height:18.5px;color:#2f2f2f;transform:scaleX(0.9900);transform-origin:0 0;">Default</div>
<div class="a" style="left:367px;top:78.56px;width:139px;height:78.56px;overflow:hidden;">
<div class="t " style="left:0.80px;top:18.84px;font-size:18.5px;line-height:18.5px;color:#2f2f2f;transform:scaleX(0.9946);transform-origin:0 0;">Accton-AS9716..</div>
<div class="t " style="left:0.80px;top:44.41px;font-size:17px;line-height:17px;color:#858585;transform:scaleX(0.9400);transform-origin:0 0;">broadcom/Tomahawk</div>
</div>
<div class="t " style="left:526.25px;top:97.40px;font-size:18.5px;line-height:18.5px;color:#2f2f2f;transform:scaleX(0.9600);transform-origin:0 0;">32</div>
<div class="t " style="left:526.25px;top:122.97px;font-size:17px;line-height:17px;color:#858585;transform:scaleX(0.8800);transform-origin:0 0;">400 GbE</div>
<div class="a" style="left:616.6px;top:92.36px;width:2px;height:52px;background:#3faa64;"></div>
<div class="a" style="left:616.6px;top:102.76px;width:16.9px;height:31px;background:#3faa64;"></div>
<div class="t " style="left:638.20px;top:110.72px;font-size:18px;line-height:18px;color:#43a869;">20</div>
<div class="a" style="left:744.6px;top:92.36px;width:2px;height:52px;background:#3faa64;"></div>
<div class="a" style="left:744.6px;top:102.76px;width:18.4px;height:31px;background:#3faa64;"></div>
<div class="t " style="left:767.70px;top:110.72px;font-size:18px;line-height:18px;color:#43a869;">22</div>
<div class="t " style="left:908.09px;top:110.05px;font-size:19.5px;line-height:19.5px;color:#e0545a;transform:scaleX(0.9900);transform-origin:0 0;">51</div>
<div class="t " style="left:1003.84px;top:110.05px;font-size:19.5px;line-height:19.5px;color:#43a869;transform:scaleX(0.9900);transform-origin:0 0;">38</div>
<div class="t " style="left:1099.84px;top:110.05px;font-size:19.5px;line-height:19.5px;color:#43a869;transform:scaleX(0.9900);transform-origin:0 0;">12</div>
<div class="t " style="left:1187.24px;top:110.05px;font-size:19.5px;line-height:19.5px;color:#e0545a;transform:scaleX(0.9900);transform-origin:0 0;">75%</div>
<div class="t " style="left:1304.84px;top:110.05px;font-size:19.5px;line-height:19.5px;color:#f4c125;transform:scaleX(0.9900);transform-origin:0 0;">49</div>
<div class="t " style="left:1413.34px;top:110.05px;font-size:19.5px;line-height:19.5px;color:#43a869;transform:scaleX(0.9900);transform-origin:0 0;">94</div>
<div class="t " style="left:1508.34px;top:110.05px;font-size:19.5px;line-height:19.5px;color:#43a869;transform:scaleX(0.9900);transform-origin:0 0;">26</div>
<svg class="a" style="left:113.00px;top:111.06px" width="15" height="15" viewBox="0 0 15 15"><circle cx="7.5" cy="7.5" r="7.3" fill="#e35459"/><rect x="6.5" y="3.3" width="2" height="5.6" rx="1" fill="#fff"/><circle cx="7.5" cy="11.1" r="1.1" fill="#fff"/></svg>
<div class="a" style="left:0px;top:235px;width:1566px;height:1px;background:#e3e3e3;"></div>
<div class="a" style="left:156px;top:157.12px;width:1px;height:78.56px;background:#efefef;"></div>
<div class="a" style="left:252px;top:157.12px;width:1px;height:78.56px;background:#efefef;"></div>
<div class="a" style="left:355px;top:157.12px;width:1px;height:78.56px;background:#efefef;"></div>
<div class="a" style="left:507px;top:157.12px;width:1px;height:78.56px;background:#efefef;"></div>
<div class="a" style="left:602px;top:157.12px;width:1px;height:78.56px;background:#efefef;"></div>
<div class="a" style="left:730px;top:157.12px;width:1px;height:78.56px;background:#efefef;"></div>
<div class="a" style="left:870px;top:157.12px;width:1px;height:78.56px;background:#efefef;"></div>
<div class="a" style="left:966px;top:157.12px;width:1px;height:78.56px;background:#efefef;"></div>
<div class="a" style="left:1061.5px;top:157.12px;width:1px;height:78.56px;background:#efefef;"></div>
<div class="a" style="left:1158px;top:157.12px;width:1px;height:78.56px;background:#efefef;"></div>
<div class="a" style="left:1253.5px;top:157.12px;width:1px;height:78.56px;background:#efefef;"></div>
<div class="a" style="left:1376px;top:157.12px;width:1px;height:78.56px;background:#efefef;"></div>
<div class="a" style="left:1470.5px;top:157.12px;width:1px;height:78.56px;background:#efefef;"></div>
<div class="t " style="left:13.60px;top:175.96px;font-size:18.5px;line-height:18.5px;color:#5ca3e3;transform:scaleX(0.9750);transform-origin:0 0;">sonic</div>
<div class="t " style="left:14.30px;top:202.33px;font-size:17px;line-height:17px;color:#858585;transform:scaleX(0.9320);transform-origin:0 0;">10.4.4.64</div>
<div class="t " style="left:169.80px;top:176.46px;font-size:18.5px;line-height:18.5px;color:#2f2f2f;transform:scaleX(0.9620);transform-origin:0 0;">Leaf</div>
<div class="t " style="left:169.80px;top:202.33px;font-size:17px;line-height:17px;color:#858585;transform:scaleX(0.9100);transform-origin:0 0;">Nyk</div>
<div class="t " style="left:266.00px;top:187.66px;font-size:18.5px;line-height:18.5px;color:#2f2f2f;transform:scaleX(0.9900);transform-origin:0 0;">Default</div>
<div class="a" style="left:367px;top:157.12px;width:139px;height:78.56px;overflow:hidden;">
<div class="t " style="left:0.80px;top:18.84px;font-size:18.5px;line-height:18.5px;color:#2f2f2f;transform:scaleX(0.8944);transform-origin:0 0;">CELESTICA-BEL..</div>
<div class="t " style="left:0.80px;top:44.41px;font-size:17px;line-height:17px;color:#858585;transform:scaleX(0.9400);transform-origin:0 0;">broadcom/TD3-X2</div>
</div>
<div class="t " style="left:530.44px;top:175.96px;font-size:18.5px;line-height:18.5px;color:#2f2f2f;transform:scaleX(0.9600);transform-origin:0 0;">56</div>
<div class="t " style="left:530.44px;top:201.53px;font-size:17px;line-height:17px;color:#858585;transform:scaleX(0.8800);transform-origin:0 0;">10 GbE</div>
<div class="a" style="left:616.6px;top:170.92px;width:2px;height:52px;background:#3faa64;"></div>
<div class="a" style="left:616.6px;top:181.32px;width:20.6px;height:31px;background:#3faa64;"></div>
<div class="t " style="left:641.90px;top:189.28px;font-size:18px;line-height:18px;color:#43a869;">25</div>
<div class="a" style="left:744.6px;top:170.92px;width:2px;height:52px;background:#ffc505;"></div>
<div class="a" style="left:744.6px;top:181.32px;width:47.9px;height:31px;background:#ffc505;"></div>
<div class="t " style="left:797.20px;top:189.28px;font-size:18px;line-height:18px;color:#f4c125;">62</div>
<div class="t " style="left:908.09px;top:188.61px;font-size:19.5px;line-height:19.5px;color:#f4c125;transform:scaleX(0.9900);transform-origin:0 0;">31</div>
<div class="t " style="left:1003.84px;top:188.61px;font-size:19.5px;line-height:19.5px;color:#43a869;transform:scaleX(0.9900);transform-origin:0 0;">27</div>
<div class="t " style="left:1099.84px;top:188.61px;font-size:19.5px;line-height:19.5px;color:#43a869;transform:scaleX(0.9900);transform-origin:0 0;">12</div>
<div class="t " style="left:1190.91px;top:188.61px;font-size:19.5px;line-height:19.5px;color:#43a869;transform:scaleX(0.9900);transform-origin:0 0;">12k</div>
<div class="t " style="left:1304.84px;top:188.61px;font-size:19.5px;line-height:19.5px;color:#43a869;transform:scaleX(0.9900);transform-origin:0 0;">33</div>
<div class="t " style="left:1407.93px;top:188.61px;font-size:19.5px;line-height:19.5px;color:#43a869;transform:scaleX(0.9900);transform-origin:0 0;">100</div>
<div class="t " style="left:1508.34px;top:188.61px;font-size:19.5px;line-height:19.5px;color:#43a869;transform:scaleX(0.9900);transform-origin:0 0;">49</div>
<div class="a" style="left:0px;top:314px;width:1566px;height:1px;background:#e3e3e3;"></div>
<div class="a" style="left:156px;top:235.68px;width:1px;height:78.56px;background:#efefef;"></div>
<div class="a" style="left:252px;top:235.68px;width:1px;height:78.56px;background:#efefef;"></div>
<div class="a" style="left:355px;top:235.68px;width:1px;height:78.56px;background:#efefef;"></div>
<div class="a" style="left:507px;top:235.68px;width:1px;height:78.56px;background:#efefef;"></div>
<div class="a" style="left:602px;top:235.68px;width:1px;height:78.56px;background:#efefef;"></div>
<div class="a" style="left:730px;top:235.68px;width:1px;height:78.56px;background:#efefef;"></div>
<div class="a" style="left:870px;top:235.68px;width:1px;height:78.56px;background:#efefef;"></div>
<div class="a" style="left:966px;top:235.68px;width:1px;height:78.56px;background:#efefef;"></div>
<div class="a" style="left:1061.5px;top:235.68px;width:1px;height:78.56px;background:#efefef;"></div>
<div class="a" style="left:1158px;top:235.68px;width:1px;height:78.56px;background:#efefef;"></div>
<div class="a" style="left:1253.5px;top:235.68px;width:1px;height:78.56px;background:#efefef;"></div>
<div class="a" style="left:1376px;top:235.68px;width:1px;height:78.56px;background:#efefef;"></div>
<div class="a" style="left:1470.5px;top:235.68px;width:1px;height:78.56px;background:#efefef;"></div>
<div class="t " style="left:13.60px;top:254.52px;font-size:18.5px;line-height:18.5px;color:#5ca3e3;transform:scaleX(0.9750);transform-origin:0 0;">sonic-nvi...</div>
<div class="t " style="left:14.30px;top:280.89px;font-size:17px;line-height:17px;color:#858585;transform:scaleX(0.9320);transform-origin:0 0;">10.4.4.69</div>
<div class="t " style="left:169.80px;top:255.02px;font-size:18.5px;line-height:18.5px;color:#2f2f2f;transform:scaleX(0.9620);transform-origin:0 0;">Leaf</div>
<div class="t " style="left:169.80px;top:280.89px;font-size:17px;line-height:17px;color:#858585;transform:scaleX(0.9100);transform-origin:0 0;">Nyk</div>
<div class="t " style="left:266.00px;top:266.22px;font-size:18.5px;line-height:18.5px;color:#2f2f2f;transform:scaleX(0.9900);transform-origin:0 0;">Default</div>
<div class="a" style="left:367px;top:235.68px;width:139px;height:78.56px;overflow:hidden;">
<div class="t " style="left:0.80px;top:18.84px;font-size:18.5px;line-height:18.5px;color:#2f2f2f;transform:scaleX(0.9600);transform-origin:0 0;">ACS-MSN2700</div>
<div class="t " style="left:0.80px;top:44.41px;font-size:17px;line-height:17px;color:#858585;transform:scaleX(0.9400);transform-origin:0 0;">mellanox</div>
</div>
<div class="t " style="left:526.25px;top:254.52px;font-size:18.5px;line-height:18.5px;color:#2f2f2f;transform:scaleX(0.9600);transform-origin:0 0;">33</div>
<div class="t " style="left:526.25px;top:280.09px;font-size:17px;line-height:17px;color:#858585;transform:scaleX(0.8800);transform-origin:0 0;">100 GbE</div>
<div class="a" style="left:616.6px;top:249.48px;width:2px;height:52px;background:#3faa64;"></div>
<div class="a" style="left:616.6px;top:259.88px;width:42.0px;height:31px;background:#3faa64;"></div>
<div class="t " style="left:663.30px;top:267.84px;font-size:18px;line-height:18px;color:#43a869;">54</div>
<div class="a" style="left:744.6px;top:249.48px;width:2px;height:52px;background:#3faa64;"></div>
<div class="a" style="left:744.6px;top:259.88px;width:33.9px;height:31px;background:#3faa64;"></div>
<div class="t " style="left:783.20px;top:267.84px;font-size:18px;line-height:18px;color:#43a869;">43</div>
<div class="t " style="left:908.09px;top:267.17px;font-size:19.5px;line-height:19.5px;color:#e0545a;transform:scaleX(0.9900);transform-origin:0 0;">40</div>
<div class="t " style="left:1003.84px;top:267.17px;font-size:19.5px;line-height:19.5px;color:#43a869;transform:scaleX(0.9900);transform-origin:0 0;">31</div>
<div class="t " style="left:1099.84px;top:267.17px;font-size:19.5px;line-height:19.5px;color:#43a869;transform:scaleX(0.9900);transform-origin:0 0;">12</div>
<div class="t " style="left:1187.24px;top:267.17px;font-size:19.5px;line-height:19.5px;color:#e0545a;transform:scaleX(0.9900);transform-origin:0 0;">57%</div>
<div class="t " style="left:1304.84px;top:267.17px;font-size:19.5px;line-height:19.5px;color:#f4c125;transform:scaleX(0.9900);transform-origin:0 0;">40</div>
<div class="t " style="left:1413.34px;top:267.17px;font-size:19.5px;line-height:19.5px;color:#43a869;transform:scaleX(0.9900);transform-origin:0 0;">98</div>
<div class="t " style="left:1508.34px;top:267.17px;font-size:19.5px;line-height:19.5px;color:#43a869;transform:scaleX(0.9900);transform-origin:0 0;">20</div>
<svg class="a" style="left:117.50px;top:268.18px" width="15" height="15" viewBox="0 0 15 15"><circle cx="7.5" cy="7.5" r="7.3" fill="#e35459"/><rect x="6.5" y="3.3" width="2" height="5.6" rx="1" fill="#fff"/><circle cx="7.5" cy="11.1" r="1.1" fill="#fff"/></svg>
<div class="a" style="left:0px;top:392px;width:1566px;height:1px;background:#e3e3e3;"></div>
<div class="a" style="left:156px;top:314.24px;width:1px;height:78.56px;background:#efefef;"></div>
<div class="a" style="left:252px;top:314.24px;width:1px;height:78.56px;background:#efefef;"></div>
<div class="a" style="left:355px;top:314.24px;width:1px;height:78.56px;background:#efefef;"></div>
<div class="a" style="left:507px;top:314.24px;width:1px;height:78.56px;background:#efefef;"></div>
<div class="a" style="left:602px;top:314.24px;width:1px;height:78.56px;background:#efefef;"></div>
<div class="a" style="left:730px;top:314.24px;width:1px;height:78.56px;background:#efefef;"></div>
<div class="a" style="left:870px;top:314.24px;width:1px;height:78.56px;background:#efefef;"></div>
<div class="a" style="left:966px;top:314.24px;width:1px;height:78.56px;background:#efefef;"></div>
<div class="a" style="left:1061.5px;top:314.24px;width:1px;height:78.56px;background:#efefef;"></div>
<div class="a" style="left:1158px;top:314.24px;width:1px;height:78.56px;background:#efefef;"></div>
<div class="a" style="left:1253.5px;top:314.24px;width:1px;height:78.56px;background:#efefef;"></div>
<div class="a" style="left:1376px;top:314.24px;width:1px;height:78.56px;background:#efefef;"></div>
<div class="a" style="left:1470.5px;top:314.24px;width:1px;height:78.56px;background:#efefef;"></div>
<div class="t " style="left:13.60px;top:333.08px;font-size:18.5px;line-height:18.5px;color:#5ca3e3;transform:scaleX(0.9750);transform-origin:0 0;">Spine-1</div>
<div class="t " style="left:14.30px;top:359.45px;font-size:17px;line-height:17px;color:#858585;transform:scaleX(0.9320);transform-origin:0 0;">10.4.4.94</div>
<div class="t " style="left:169.80px;top:333.58px;font-size:18.5px;line-height:18.5px;color:#2f2f2f;transform:scaleX(0.9620);transform-origin:0 0;">Spine</div>
<div class="t " style="left:169.80px;top:359.45px;font-size:17px;line-height:17px;color:#858585;transform:scaleX(0.9100);transform-origin:0 0;">Reno</div>
<div class="t " style="left:266.00px;top:344.78px;font-size:18.5px;line-height:18.5px;color:#2f2f2f;transform:scaleX(0.9900);transform-origin:0 0;">Default</div>
<div class="a" style="left:367px;top:314.24px;width:139px;height:78.56px;overflow:hidden;">
<div class="t " style="left:0.80px;top:18.84px;font-size:18.5px;line-height:18.5px;color:#2f2f2f;transform:scaleX(0.9946);transform-origin:0 0;">Accton-AS5812..</div>
<div class="t " style="left:0.80px;top:44.41px;font-size:17px;line-height:17px;color:#858585;transform:scaleX(0.9400);transform-origin:0 0;">broadcom/TD2+</div>
</div>
<div class="t " style="left:530.44px;top:333.08px;font-size:18.5px;line-height:18.5px;color:#2f2f2f;transform:scaleX(0.9600);transform-origin:0 0;">54</div>
<div class="t " style="left:530.44px;top:358.65px;font-size:17px;line-height:17px;color:#858585;transform:scaleX(0.8800);transform-origin:0 0;">40 GbE</div>
<div class="a" style="left:616.6px;top:328.04px;width:2px;height:52px;background:#ffc505;"></div>
<div class="a" style="left:616.6px;top:338.44px;width:50.9px;height:31px;background:#ffc505;"></div>
<div class="t " style="left:672.20px;top:346.40px;font-size:18px;line-height:18px;color:#f4c125;">66</div>
<div class="a" style="left:744.6px;top:328.04px;width:2px;height:52px;background:#3faa64;"></div>
<div class="a" style="left:744.6px;top:338.44px;width:40.5px;height:31px;background:#3faa64;"></div>
<div class="t " style="left:789.80px;top:346.40px;font-size:18px;line-height:18px;color:#43a869;">52</div>
<div class="t " style="left:908.09px;top:345.73px;font-size:19.5px;line-height:19.5px;color:#e0545a;transform:scaleX(0.9900);transform-origin:0 0;">42</div>
<div class="t " style="left:1003.84px;top:345.73px;font-size:19.5px;line-height:19.5px;color:#f4c125;transform:scaleX(0.9900);transform-origin:0 0;">47</div>
<div class="t " style="left:1099.84px;top:345.73px;font-size:19.5px;line-height:19.5px;color:#43a869;transform:scaleX(0.9900);transform-origin:0 0;">12</div>
<div class="t " style="left:1187.24px;top:345.73px;font-size:19.5px;line-height:19.5px;color:#e0545a;transform:scaleX(0.9900);transform-origin:0 0;">45%</div>
<div class="t " style="left:1304.84px;top:345.73px;font-size:19.5px;line-height:19.5px;color:#f4c125;transform:scaleX(0.9900);transform-origin:0 0;">47</div>
<div class="t " style="left:1413.34px;top:345.73px;font-size:19.5px;line-height:19.5px;color:#43a869;transform:scaleX(0.9900);transform-origin:0 0;">94</div>
<div class="t " style="left:1508.34px;top:345.73px;font-size:19.5px;line-height:19.5px;color:#43a869;transform:scaleX(0.9900);transform-origin:0 0;">18</div>
<svg class="a" style="left:113.00px;top:346.74px" width="15" height="15" viewBox="0 0 15 15"><circle cx="7.5" cy="7.5" r="7.3" fill="#e35459"/><rect x="6.5" y="3.3" width="2" height="5.6" rx="1" fill="#fff"/><circle cx="7.5" cy="11.1" r="1.1" fill="#fff"/></svg>
<div class="a" style="left:0px;top:471px;width:1566px;height:1px;background:#e3e3e3;"></div>
<div class="a" style="left:156px;top:392.8px;width:1px;height:78.56px;background:#efefef;"></div>
<div class="a" style="left:252px;top:392.8px;width:1px;height:78.56px;background:#efefef;"></div>
<div class="a" style="left:355px;top:392.8px;width:1px;height:78.56px;background:#efefef;"></div>
<div class="a" style="left:507px;top:392.8px;width:1px;height:78.56px;background:#efefef;"></div>
<div class="a" style="left:602px;top:392.8px;width:1px;height:78.56px;background:#efefef;"></div>
<div class="a" style="left:730px;top:392.8px;width:1px;height:78.56px;background:#efefef;"></div>
<div class="a" style="left:870px;top:392.8px;width:1px;height:78.56px;background:#efefef;"></div>
<div class="a" style="left:966px;top:392.8px;width:1px;height:78.56px;background:#efefef;"></div>
<div class="a" style="left:1061.5px;top:392.8px;width:1px;height:78.56px;background:#efefef;"></div>
<div class="a" style="left:1158px;top:392.8px;width:1px;height:78.56px;background:#efefef;"></div>
<div class="a" style="left:1253.5px;top:392.8px;width:1px;height:78.56px;background:#efefef;"></div>
<div class="a" style="left:1376px;top:392.8px;width:1px;height:78.56px;background:#efefef;"></div>
<div class="a" style="left:1470.5px;top:392.8px;width:1px;height:78.56px;background:#efefef;"></div>
<div class="t " style="left:13.60px;top:411.64px;font-size:18.5px;line-height:18.5px;color:#5ca3e3;transform:scaleX(0.9750);transform-origin:0 0;">Leaf-1</div>
<div class="t " style="left:14.30px;top:438.01px;font-size:17px;line-height:17px;color:#858585;transform:scaleX(0.9320);transform-origin:0 0;">10.4.4.96</div>
<div class="t " style="left:169.80px;top:412.14px;font-size:18.5px;line-height:18.5px;color:#2f2f2f;transform:scaleX(0.9620);transform-origin:0 0;">Spine</div>
<div class="t " style="left:169.80px;top:438.01px;font-size:17px;line-height:17px;color:#858585;transform:scaleX(0.9100);transform-origin:0 0;">Reno</div>
<div class="t " style="left:266.00px;top:423.34px;font-size:18.5px;line-height:18.5px;color:#2f2f2f;transform:scaleX(0.9900);transform-origin:0 0;">Default</div>
<div class="a" style="left:367px;top:392.80px;width:139px;height:78.56px;overflow:hidden;">
<div class="t " style="left:0.80px;top:18.84px;font-size:18.5px;line-height:18.5px;color:#2f2f2f;transform:scaleX(0.9946);transform-origin:0 0;">Accton-AS4630..</div>
<div class="t " style="left:0.80px;top:44.41px;font-size:17px;line-height:17px;color:#858585;transform:scaleX(0.9400);transform-origin:0 0;">broadcom/TD3-X5</div>
</div>
<div class="t " style="left:526.25px;top:411.64px;font-size:18.5px;line-height:18.5px;color:#2f2f2f;transform:scaleX(0.9600);transform-origin:0 0;">54</div>
<div class="t " style="left:526.25px;top:437.21px;font-size:17px;line-height:17px;color:#858585;transform:scaleX(0.8800);transform-origin:0 0;">100 GbE</div>
<div class="a" style="left:616.6px;top:406.6px;width:2px;height:52px;background:#3faa64;"></div>
<div class="a" style="left:616.6px;top:417.0px;width:33.9px;height:31px;background:#3faa64;"></div>
<div class="t " style="left:655.20px;top:424.96px;font-size:18px;line-height:18px;color:#43a869;">43</div>
<div class="a" style="left:744.6px;top:406.6px;width:2px;height:52px;background:#3faa64;"></div>
<div class="a" style="left:744.6px;top:417.0px;width:16.9px;height:31px;background:#3faa64;"></div>
<div class="t " style="left:766.20px;top:424.96px;font-size:18px;line-height:18px;color:#43a869;">20</div>
<div class="t " style="left:908.09px;top:424.29px;font-size:19.5px;line-height:19.5px;color:#e0545a;transform:scaleX(0.9900);transform-origin:0 0;">55</div>
<div class="t " style="left:1003.84px;top:424.29px;font-size:19.5px;line-height:19.5px;color:#f4c125;transform:scaleX(0.9900);transform-origin:0 0;">40</div>
<div class="t " style="left:1099.84px;top:424.29px;font-size:19.5px;line-height:19.5px;color:#43a869;transform:scaleX(0.9900);transform-origin:0 0;">12</div>
<div class="t " style="left:1187.24px;top:424.29px;font-size:19.5px;line-height:19.5px;color:#e0545a;transform:scaleX(0.9900);transform-origin:0 0;">49%</div>
<div class="t " style="left:1304.84px;top:424.29px;font-size:19.5px;line-height:19.5px;color:#e0545a;transform:scaleX(0.9900);transform-origin:0 0;">59</div>
<div class="t " style="left:1413.34px;top:424.29px;font-size:19.5px;line-height:19.5px;color:#43a869;transform:scaleX(0.9900);transform-origin:0 0;">90</div>
<div class="t " style="left:1508.34px;top:424.29px;font-size:19.5px;line-height:19.5px;color:#43a869;transform:scaleX(0.9900);transform-origin:0 0;">31</div>
<svg class="a" style="left:113.00px;top:425.30px" width="15" height="15" viewBox="0 0 15 15"><circle cx="7.5" cy="7.5" r="7.3" fill="#e35459"/><rect x="6.5" y="3.3" width="2" height="5.6" rx="1" fill="#fff"/><circle cx="7.5" cy="11.1" r="1.1" fill="#fff"/></svg>
<div class="a" style="left:0px;top:549px;width:1566px;height:1px;background:#e3e3e3;"></div>
<div class="a" style="left:156px;top:471.36px;width:1px;height:78.56px;background:#efefef;"></div>
<div class="a" style="left:252px;top:471.36px;width:1px;height:78.56px;background:#efefef;"></div>
<div class="a" style="left:355px;top:471.36px;width:1px;height:78.56px;background:#efefef;"></div>
<div class="a" style="left:507px;top:471.36px;width:1px;height:78.56px;background:#efefef;"></div>
<div class="a" style="left:602px;top:471.36px;width:1px;height:78.56px;background:#efefef;"></div>
<div class="a" style="left:730px;top:471.36px;width:1px;height:78.56px;background:#efefef;"></div>
<div class="a" style="left:870px;top:471.36px;width:1px;height:78.56px;background:#efefef;"></div>
<div class="a" style="left:966px;top:471.36px;width:1px;height:78.56px;background:#efefef;"></div>
<div class="a" style="left:1061.5px;top:471.36px;width:1px;height:78.56px;background:#efefef;"></div>
<div class="a" style="left:1158px;top:471.36px;width:1px;height:78.56px;background:#efefef;"></div>
<div class="a" style="left:1253.5px;top:471.36px;width:1px;height:78.56px;background:#efefef;"></div>
<div class="a" style="left:1376px;top:471.36px;width:1px;height:78.56px;background:#efefef;"></div>
<div class="a" style="left:1470.5px;top:471.36px;width:1px;height:78.56px;background:#efefef;"></div>
<div class="t " style="left:13.60px;top:490.20px;font-size:18.5px;line-height:18.5px;color:#5ca3e3;transform:scaleX(0.9750);transform-origin:0 0;">Leaf-3</div>
<div class="t " style="left:14.30px;top:516.57px;font-size:17px;line-height:17px;color:#858585;transform:scaleX(0.9320);transform-origin:0 0;">10.4.4.98</div>
<div class="t " style="left:169.80px;top:490.70px;font-size:18.5px;line-height:18.5px;color:#2f2f2f;transform:scaleX(0.9620);transform-origin:0 0;">Leaf</div>
<div class="t " style="left:169.80px;top:516.57px;font-size:17px;line-height:17px;color:#858585;transform:scaleX(0.9100);transform-origin:0 0;">Reno</div>
<div class="t " style="left:266.00px;top:501.90px;font-size:18.5px;line-height:18.5px;color:#2f2f2f;transform:scaleX(0.9900);transform-origin:0 0;">Default</div>
<div class="a" style="left:367px;top:471.36px;width:139px;height:78.56px;overflow:hidden;">
<div class="t " style="left:0.80px;top:18.84px;font-size:18.5px;line-height:18.5px;color:#2f2f2f;transform:scaleX(0.9946);transform-origin:0 0;">Accton-AS7326..</div>
<div class="t " style="left:0.80px;top:44.41px;font-size:17px;line-height:17px;color:#858585;transform:scaleX(0.9400);transform-origin:0 0;">broadcom/TD3</div>
</div>
<div class="t " style="left:526.25px;top:490.20px;font-size:18.5px;line-height:18.5px;color:#2f2f2f;transform:scaleX(0.9600);transform-origin:0 0;">56</div>
<div class="t " style="left:526.25px;top:515.77px;font-size:17px;line-height:17px;color:#858585;transform:scaleX(0.8800);transform-origin:0 0;">100 GbE</div>
<div class="a" style="left:616.6px;top:485.16px;width:2px;height:52px;background:#3faa64;"></div>
<div class="a" style="left:616.6px;top:495.56px;width:13.9px;height:31px;background:#3faa64;"></div>
<div class="t " style="left:636.00px;top:503.52px;font-size:18px;line-height:18px;color:#43a869;">16</div>
<div class="a" style="left:744.6px;top:485.16px;width:2px;height:52px;background:#3faa64;"></div>
<div class="a" style="left:744.6px;top:495.56px;width:18.4px;height:31px;background:#3faa64;"></div>
<div class="t " style="left:767.70px;top:503.52px;font-size:18px;line-height:18px;color:#43a869;">22</div>
<div class="t " style="left:908.09px;top:502.85px;font-size:19.5px;line-height:19.5px;color:#e0545a;transform:scaleX(0.9900);transform-origin:0 0;">52</div>
<div class="t " style="left:1003.84px;top:502.85px;font-size:19.5px;line-height:19.5px;color:#f4c125;transform:scaleX(0.9900);transform-origin:0 0;">40</div>
<div class="t " style="left:1099.84px;top:502.85px;font-size:19.5px;line-height:19.5px;color:#43a869;transform:scaleX(0.9900);transform-origin:0 0;">12</div>
<div class="t " style="left:1187.24px;top:502.85px;font-size:19.5px;line-height:19.5px;color:#e0545a;transform:scaleX(0.9900);transform-origin:0 0;">38%</div>
<div class="t " style="left:1304.84px;top:502.85px;font-size:19.5px;line-height:19.5px;color:#43a869;transform:scaleX(0.9900);transform-origin:0 0;">32</div>
<div class="t " style="left:1413.34px;top:502.85px;font-size:19.5px;line-height:19.5px;color:#43a869;transform:scaleX(0.9900);transform-origin:0 0;">96</div>
<div class="t " style="left:1508.34px;top:502.85px;font-size:19.5px;line-height:19.5px;color:#43a869;transform:scaleX(0.9900);transform-origin:0 0;">13</div>
<svg class="a" style="left:113.00px;top:503.86px" width="15" height="15" viewBox="0 0 15 15"><circle cx="7.5" cy="7.5" r="7.3" fill="#e35459"/><rect x="6.5" y="3.3" width="2" height="5.6" rx="1" fill="#fff"/><circle cx="7.5" cy="11.1" r="1.1" fill="#fff"/></svg>
<div class="a" style="left:0px;top:628px;width:1566px;height:1px;background:#e3e3e3;"></div>
<div class="a" style="left:156px;top:549.92px;width:1px;height:78.56px;background:#efefef;"></div>
<div class="a" style="left:252px;top:549.92px;width:1px;height:78.56px;background:#efefef;"></div>
<div class="a" style="left:355px;top:549.92px;width:1px;height:78.56px;background:#efefef;"></div>
<div class="a" style="left:507px;top:549.92px;width:1px;height:78.56px;background:#efefef;"></div>
<div class="a" style="left:602px;top:549.92px;width:1px;height:78.56px;background:#efefef;"></div>
<div class="a" style="left:730px;top:549.92px;width:1px;height:78.56px;background:#efefef;"></div>
<div class="a" style="left:870px;top:549.92px;width:1px;height:78.56px;background:#efefef;"></div>
<div class="a" style="left:966px;top:549.92px;width:1px;height:78.56px;background:#efefef;"></div>
<div class="a" style="left:1061.5px;top:549.92px;width:1px;height:78.56px;background:#efefef;"></div>
<div class="a" style="left:1158px;top:549.92px;width:1px;height:78.56px;background:#efefef;"></div>
<div class="a" style="left:1253.5px;top:549.92px;width:1px;height:78.56px;background:#efefef;"></div>
<div class="a" style="left:1376px;top:549.92px;width:1px;height:78.56px;background:#efefef;"></div>
<div class="a" style="left:1470.5px;top:549.92px;width:1px;height:78.56px;background:#efefef;"></div>
<div class="t " style="left:13.60px;top:568.76px;font-size:18.5px;line-height:18.5px;color:#5ca3e3;transform:scaleX(0.9750);transform-origin:0 0;">Leaf-2</div>
<div class="t " style="left:14.30px;top:595.13px;font-size:17px;line-height:17px;color:#858585;transform:scaleX(0.9320);transform-origin:0 0;">10.4.4.101</div>
<div class="t " style="left:169.80px;top:569.26px;font-size:18.5px;line-height:18.5px;color:#2f2f2f;transform:scaleX(0.9620);transform-origin:0 0;">Leaf</div>
<div class="t " style="left:169.80px;top:595.13px;font-size:17px;line-height:17px;color:#858585;transform:scaleX(0.9100);transform-origin:0 0;">Reno</div>
<div class="t " style="left:266.00px;top:580.46px;font-size:18.5px;line-height:18.5px;color:#2f2f2f;transform:scaleX(0.9900);transform-origin:0 0;">Default</div>
<div class="a" style="left:367px;top:549.92px;width:139px;height:78.56px;overflow:hidden;">
<div class="t " style="left:0.80px;top:18.84px;font-size:18.5px;line-height:18.5px;color:#2f2f2f;transform:scaleX(0.9946);transform-origin:0 0;">Accton-AS4630..</div>
<div class="t " style="left:0.80px;top:44.41px;font-size:17px;line-height:17px;color:#858585;transform:scaleX(0.9400);transform-origin:0 0;">broadcom/TD3-X5</div>
</div>
<div class="t " style="left:526.25px;top:568.76px;font-size:18.5px;line-height:18.5px;color:#2f2f2f;transform:scaleX(0.9600);transform-origin:0 0;">54</div>
<div class="t " style="left:526.25px;top:594.33px;font-size:17px;line-height:17px;color:#858585;transform:scaleX(0.8800);transform-origin:0 0;">100 GbE</div>
<div class="a" style="left:616.6px;top:563.72px;width:2px;height:52px;background:#3faa64;"></div>
<div class="a" style="left:616.6px;top:574.12px;width:34.6px;height:31px;background:#3faa64;"></div>
<div class="t " style="left:655.90px;top:582.08px;font-size:18px;line-height:18px;color:#43a869;">44</div>
<div class="a" style="left:744.6px;top:563.72px;width:2px;height:52px;background:#3faa64;"></div>
<div class="a" style="left:744.6px;top:574.12px;width:17.6px;height:31px;background:#3faa64;"></div>
<div class="t " style="left:766.90px;top:582.08px;font-size:18px;line-height:18px;color:#43a869;">21</div>
<div class="t " style="left:908.09px;top:581.41px;font-size:19.5px;line-height:19.5px;color:#e0545a;transform:scaleX(0.9900);transform-origin:0 0;">59</div>
<div class="t " style="left:1003.84px;top:581.41px;font-size:19.5px;line-height:19.5px;color:#43a869;transform:scaleX(0.9900);transform-origin:0 0;">37</div>
<div class="t " style="left:1099.84px;top:581.41px;font-size:19.5px;line-height:19.5px;color:#43a869;transform:scaleX(0.9900);transform-origin:0 0;">54</div>
<div class="t " style="left:1187.24px;top:581.41px;font-size:19.5px;line-height:19.5px;color:#e0545a;transform:scaleX(0.9900);transform-origin:0 0;">51%</div>
<div class="t " style="left:1304.84px;top:581.41px;font-size:19.5px;line-height:19.5px;color:#e0545a;transform:scaleX(0.9900);transform-origin:0 0;">61</div>
<div class="t " style="left:1413.34px;top:581.41px;font-size:19.5px;line-height:19.5px;color:#43a869;transform:scaleX(0.9900);transform-origin:0 0;">94</div>
<div class="t " style="left:1508.34px;top:581.41px;font-size:19.5px;line-height:19.5px;color:#43a869;transform:scaleX(0.9900);transform-origin:0 0;">13</div>
<svg class="a" style="left:113.00px;top:582.42px" width="15" height="15" viewBox="0 0 15 15"><circle cx="7.5" cy="7.5" r="7.3" fill="#e35459"/><rect x="6.5" y="3.3" width="2" height="5.6" rx="1" fill="#fff"/><circle cx="7.5" cy="11.1" r="1.1" fill="#fff"/></svg>
<div class="a" style="left:0px;top:707px;width:1566px;height:1px;background:#e3e3e3;"></div>
<div class="a" style="left:156px;top:628.48px;width:1px;height:78.56px;background:#efefef;"></div>
<div class="a" style="left:252px;top:628.48px;width:1px;height:78.56px;background:#efefef;"></div>
<div class="a" style="left:355px;top:628.48px;width:1px;height:78.56px;background:#efefef;"></div>
<div class="a" style="left:507px;top:628.48px;width:1px;height:78.56px;background:#efefef;"></div>
<div class="a" style="left:602px;top:628.48px;width:1px;height:78.56px;background:#efefef;"></div>
<div class="a" style="left:730px;top:628.48px;width:1px;height:78.56px;background:#efefef;"></div>
<div class="a" style="left:870px;top:628.48px;width:1px;height:78.56px;background:#efefef;"></div>
<div class="a" style="left:966px;top:628.48px;width:1px;height:78.56px;background:#efefef;"></div>
<div class="a" style="left:1061.5px;top:628.48px;width:1px;height:78.56px;background:#efefef;"></div>
<div class="a" style="left:1158px;top:628.48px;width:1px;height:78.56px;background:#efefef;"></div>
<div class="a" style="left:1253.5px;top:628.48px;width:1px;height:78.56px;background:#efefef;"></div>
<div class="a" style="left:1376px;top:628.48px;width:1px;height:78.56px;background:#efefef;"></div>
<div class="a" style="left:1470.5px;top:628.48px;width:1px;height:78.56px;background:#efefef;"></div>
<div class="t " style="left:13.60px;top:647.32px;font-size:18.5px;line-height:18.5px;color:#5ca3e3;transform:scaleX(0.9750);transform-origin:0 0;">Edge-cor...</div>
<div class="t " style="left:14.30px;top:673.69px;font-size:17px;line-height:17px;color:#858585;transform:scaleX(0.9320);transform-origin:0 0;">172.19.0.20</div>
<div class="t " style="left:169.80px;top:647.82px;font-size:18.5px;line-height:18.5px;color:#2f2f2f;transform:scaleX(0.9620);transform-origin:0 0;">Spine</div>
<div class="t " style="left:169.80px;top:673.69px;font-size:17px;line-height:17px;color:#858585;transform:scaleX(0.9100);transform-origin:0 0;">San Jose</div>
<div class="t " style="left:266.00px;top:659.02px;font-size:18.5px;line-height:18.5px;color:#2f2f2f;transform:scaleX(0.9900);transform-origin:0 0;">9</div>
<div class="a" style="left:367px;top:628.48px;width:139px;height:78.56px;overflow:hidden;">
<div class="t " style="left:0.80px;top:18.84px;font-size:18.5px;line-height:18.5px;color:#2f2f2f;transform:scaleX(1.0163);transform-origin:0 0;">Accton-As9716..</div>
<div class="t " style="left:0.80px;top:44.41px;font-size:17px;line-height:17px;color:#858585;transform:scaleX(0.9400);transform-origin:0 0;">broadcom</div>
</div>
<div class="t " style="left:526.25px;top:647.32px;font-size:18.5px;line-height:18.5px;color:#2f2f2f;transform:scaleX(0.9600);transform-origin:0 0;">32</div>
<div class="t " style="left:526.25px;top:672.89px;font-size:17px;line-height:17px;color:#858585;transform:scaleX(0.8800);transform-origin:0 0;">100 GbE</div>
<div class="a" style="left:616.6px;top:642.28px;width:2px;height:52px;background:#3faa64;"></div>
<div class="a" style="left:616.6px;top:652.68px;width:33.1px;height:31px;background:#3faa64;"></div>
<div class="t " style="left:654.40px;top:660.64px;font-size:18px;line-height:18px;color:#43a869;">42</div>
<div class="a" style="left:744.6px;top:642.28px;width:2px;height:52px;background:#3faa64;"></div>
<div class="a" style="left:744.6px;top:652.68px;width:33.1px;height:31px;background:#3faa64;"></div>
<div class="t " style="left:782.40px;top:660.64px;font-size:18px;line-height:18px;color:#43a869;">42</div>
<div class="t " style="left:908.09px;top:659.97px;font-size:19.5px;line-height:19.5px;color:#f4c125;transform:scaleX(0.9900);transform-origin:0 0;">30</div>
<div class="t " style="left:1003.84px;top:659.97px;font-size:19.5px;line-height:19.5px;color:#e0545a;transform:scaleX(0.9900);transform-origin:0 0;">80</div>
<div class="t " style="left:1099.84px;top:659.97px;font-size:19.5px;line-height:19.5px;color:#43a869;transform:scaleX(0.9900);transform-origin:0 0;">12</div>
<div class="t " style="left:1187.24px;top:659.97px;font-size:19.5px;line-height:19.5px;color:#e0545a;transform:scaleX(0.9900);transform-origin:0 0;">56%</div>
<div class="t " style="left:1304.84px;top:659.97px;font-size:19.5px;line-height:19.5px;color:#e0545a;transform:scaleX(0.9900);transform-origin:0 0;">70</div>
<div class="t " style="left:1413.34px;top:659.97px;font-size:19.5px;line-height:19.5px;color:#43a869;transform:scaleX(0.9900);transform-origin:0 0;">92</div>
<div class="t " style="left:1508.34px;top:659.97px;font-size:19.5px;line-height:19.5px;color:#f4c125;transform:scaleX(0.9900);transform-origin:0 0;">66</div>
<div class="a" style="left:0px;top:785px;width:1566px;height:1px;background:#e3e3e3;"></div>
<div class="a" style="left:156px;top:707.04px;width:1px;height:78.56px;background:#efefef;"></div>
<div class="a" style="left:252px;top:707.04px;width:1px;height:78.56px;background:#efefef;"></div>
<div class="a" style="left:355px;top:707.04px;width:1px;height:78.56px;background:#efefef;"></div>
<div class="a" style="left:507px;top:707.04px;width:1px;height:78.56px;background:#efefef;"></div>
<div class="a" style="left:602px;top:707.04px;width:1px;height:78.56px;background:#efefef;"></div>
<div class="a" style="left:730px;top:707.04px;width:1px;height:78.56px;background:#efefef;"></div>
<div class="a" style="left:870px;top:707.04px;width:1px;height:78.56px;background:#efefef;"></div>
<div class="a" style="left:966px;top:707.04px;width:1px;height:78.56px;background:#efefef;"></div>
<div class="a" style="left:1061.5px;top:707.04px;width:1px;height:78.56px;background:#efefef;"></div>
<div class="a" style="left:1158px;top:707.04px;width:1px;height:78.56px;background:#efefef;"></div>
<div class="a" style="left:1253.5px;top:707.04px;width:1px;height:78.56px;background:#efefef;"></div>
<div class="a" style="left:1376px;top:707.04px;width:1px;height:78.56px;background:#efefef;"></div>
<div class="a" style="left:1470.5px;top:707.04px;width:1px;height:78.56px;background:#efefef;"></div>
<div class="t " style="left:13.60px;top:725.88px;font-size:18.5px;line-height:18.5px;color:#5ca3e3;transform:scaleX(0.9750);transform-origin:0 0;">Edge-cor...</div>
<div class="t " style="left:14.30px;top:752.25px;font-size:17px;line-height:17px;color:#858585;transform:scaleX(0.9320);transform-origin:0 0;">172.19.0.21</div>
<div class="t " style="left:169.80px;top:726.38px;font-size:18.5px;line-height:18.5px;color:#2f2f2f;transform:scaleX(0.9620);transform-origin:0 0;">Spine</div>
<div class="t " style="left:169.80px;top:752.25px;font-size:17px;line-height:17px;color:#858585;transform:scaleX(0.9100);transform-origin:0 0;">San Jose</div>
<div class="t " style="left:266.00px;top:737.58px;font-size:18.5px;line-height:18.5px;color:#2f2f2f;transform:scaleX(0.9900);transform-origin:0 0;">9</div>
<div class="a" style="left:367px;top:707.04px;width:139px;height:78.56px;overflow:hidden;">
<div class="t " style="left:0.80px;top:18.84px;font-size:18.5px;line-height:18.5px;color:#2f2f2f;transform:scaleX(1.0163);transform-origin:0 0;">Accton-As9716..</div>
<div class="t " style="left:0.80px;top:44.41px;font-size:17px;line-height:17px;color:#858585;transform:scaleX(0.9400);transform-origin:0 0;">broadcom</div>
</div>
<div class="t " style="left:526.25px;top:725.88px;font-size:18.5px;line-height:18.5px;color:#2f2f2f;transform:scaleX(0.9600);transform-origin:0 0;">32</div>
<div class="t " style="left:526.25px;top:751.45px;font-size:17px;line-height:17px;color:#858585;transform:scaleX(0.8800);transform-origin:0 0;">100 GbE</div>
<div class="a" style="left:616.6px;top:720.84px;width:2px;height:52px;background:#3faa64;"></div>
<div class="a" style="left:616.6px;top:731.24px;width:33.1px;height:31px;background:#3faa64;"></div>
<div class="t " style="left:654.40px;top:739.20px;font-size:18px;line-height:18px;color:#43a869;">42</div>
<div class="a" style="left:744.6px;top:720.84px;width:2px;height:52px;background:#3faa64;"></div>
<div class="a" style="left:744.6px;top:731.24px;width:33.1px;height:31px;background:#3faa64;"></div>
<div class="t " style="left:782.40px;top:739.20px;font-size:18px;line-height:18px;color:#43a869;">42</div>
<div class="t " style="left:908.09px;top:738.53px;font-size:19.5px;line-height:19.5px;color:#f4c125;transform:scaleX(0.9900);transform-origin:0 0;">30</div>
<div class="t " style="left:1003.84px;top:738.53px;font-size:19.5px;line-height:19.5px;color:#e0545a;transform:scaleX(0.9900);transform-origin:0 0;">80</div>
<div class="t " style="left:1099.84px;top:738.53px;font-size:19.5px;line-height:19.5px;color:#43a869;transform:scaleX(0.9900);transform-origin:0 0;">12</div>
<div class="t " style="left:1187.24px;top:738.53px;font-size:19.5px;line-height:19.5px;color:#e0545a;transform:scaleX(0.9900);transform-origin:0 0;">56%</div>
<div class="t " style="left:1304.84px;top:738.53px;font-size:19.5px;line-height:19.5px;color:#e0545a;transform:scaleX(0.9900);transform-origin:0 0;">70</div>
<div class="t " style="left:1413.34px;top:738.53px;font-size:19.5px;line-height:19.5px;color:#43a869;transform:scaleX(0.9900);transform-origin:0 0;">92</div>
<div class="t " style="left:1508.34px;top:738.53px;font-size:19.5px;line-height:19.5px;color:#f4c125;transform:scaleX(0.9900);transform-origin:0 0;">66</div>
<div class="a" style="left:1568px;top:7px;width:16px;height:10px;background:transparent;"></div>
<svg class="a" style="left:1569px;top:7px" width="15" height="10" viewBox="0 0 15 10"><path d="M1.5 9 L7.5 1.5 L13.5 9 Z" fill="#888" stroke="#888" stroke-linejoin="round"/></svg>
<div class="a" style="left:1571px;top:25.5px;width:11.7px;height:632px;background:#969696;border-radius:6px;"></div>
<svg class="a" style="left:1569px;top:715px" width="15" height="11" viewBox="0 0 15 11"><path d="M1.5 1.5 L13.5 1.5 L7.5 9.5 Z" fill="#888" stroke="#888" stroke-linejoin="round"/></svg>
</div>
<div class="a" style="left:385px;top:252px;width:1px;height:730px;background:#e8e8e8;"></div>
<div class="a" style="left:385px;top:981.5px;width:1586px;height:1.3px;background:#e2e2e2;"></div>
<div class="a" style="left:385px;top:180px;width:1566px;height:72px;background:#4296da;"></div>
<div class="a" style="left:1638.5px;top:180px;width:1.3px;height:72px;background:#b9d9f3;"></div>
<div class="a" style="left:1639.5px;top:216.5px;width:312px;height:1.3px;background:#b9d9f3;"></div>
<div class="a" style="left:1760.5px;top:217px;width:1.3px;height:35px;background:#b9d9f3;"></div>
<div class="a" style="left:1855px;top:217px;width:1.3px;height:35px;background:#b9d9f3;"></div>
<div class="t " style="left:398.40px;top:195.64px;font-size:18.5px;line-height:18.5px;color:#ffffff;font-weight:700;transform:scaleX(0.9496);transform-origin:0 0;">Host</div>
<div class="t " style="left:398.40px;top:222.38px;font-size:15.5px;line-height:15.5px;color:#ffffff;transform:scaleX(0.9609);transform-origin:0 0;-webkit-text-stroke:0.35px #fff;">IP</div>
<svg class="a" style="left:514px;top:211px" width="14" height="9" viewBox="0 0 14 9"><path d="M1.5 7.5 L7 1.5 L12.5 7.5 Z" fill="#fff" stroke="#fff" stroke-linejoin="round"/></svg>
<div class="t " style="left:555.30px;top:195.64px;font-size:18.5px;line-height:18.5px;color:#ffffff;font-weight:700;transform:scaleX(0.9217);transform-origin:0 0;">Role</div>
<div class="t " style="left:555.30px;top:222.80px;font-size:15px;line-height:15px;color:#ffffff;transform:scaleX(1.0200);transform-origin:0 0;-webkit-text-stroke:0.35px #fff;">Region</div>
<div class="t " style="left:650.80px;top:207.74px;font-size:18.5px;line-height:18.5px;color:#ffffff;font-weight:700;transform:scaleX(0.9333);transform-origin:0 0;">Fabric</div>
<div class="t " style="left:752.30px;top:195.64px;font-size:18.5px;line-height:18.5px;color:#ffffff;font-weight:700;transform:scaleX(0.9376);transform-origin:0 0;">SKU</div>
<div class="t " style="left:752.30px;top:222.80px;font-size:15px;line-height:15px;color:#ffffff;-webkit-text-stroke:0.35px #fff;">ASIC</div>
<div class="t " style="left:906.40px;top:195.64px;font-size:18.5px;line-height:18.5px;color:#ffffff;font-weight:700;transform:scaleX(0.9459);transform-origin:0 0;">Ports</div>
<div class="t " style="left:906.40px;top:222.80px;font-size:15px;line-height:15px;color:#ffffff;transform:scaleX(1.0329);transform-origin:0 0;-webkit-text-stroke:0.35px #fff;">Max.Speed</div>
<div class="t " style="left:989.00px;top:196.64px;font-size:18.5px;line-height:18.5px;color:#ffffff;font-weight:700;transform:scaleX(0.9424);transform-origin:0 0;">CPU Utilization</div>
<div class="t " style="left:1041.20px;top:221.38px;font-size:15.5px;line-height:15.5px;color:#ffffff;transform:scaleX(0.9098);transform-origin:0 0;-webkit-text-stroke:0.35px #fff;">(%)</div>
<div class="t " style="left:1116.30px;top:196.64px;font-size:18.5px;line-height:18.5px;color:#ffffff;font-weight:700;transform:scaleX(0.9627);transform-origin:0 0;">Memory Utilizat...</div>
<div class="t " style="left:1178.70px;top:221.38px;font-size:15.5px;line-height:15.5px;color:#ffffff;transform:scaleX(0.9098);transform-origin:0 0;-webkit-text-stroke:0.35px #fff;">(%)</div>
<div class="t " style="left:1294.90px;top:188.53px;font-size:14.5px;line-height:14.5px;color:#ffffff;font-weight:700;transform:scaleX(1.0132);transform-origin:0 0;">CPU</div>
<div class="t " style="left:1270.15px;top:210.16px;font-size:16px;line-height:16px;color:#ffffff;font-weight:700;transform:scaleX(0.9446);transform-origin:0 0;">Temperat...</div>
<div class="t " style="left:1296.15px;top:229.33px;font-size:16.5px;line-height:16.5px;color:#ffffff;transform:scaleX(0.9650);transform-origin:0 0;-webkit-text-stroke:0.35px #fff;">(&#176;C)</div>
<div class="t " style="left:1391.00px;top:188.53px;font-size:14.5px;line-height:14.5px;color:#ffffff;font-weight:700;transform:scaleX(1.0044);transform-origin:0 0;">PSU</div>
<div class="t " style="left:1365.75px;top:210.16px;font-size:16px;line-height:16px;color:#ffffff;font-weight:700;transform:scaleX(0.9446);transform-origin:0 0;">Temperat...</div>
<div class="t " style="left:1391.75px;top:229.33px;font-size:16.5px;line-height:16.5px;color:#ffffff;transform:scaleX(0.9650);transform-origin:0 0;-webkit-text-stroke:0.35px #fff;">(&#176;C)</div>
<div class="t " style="left:1473.10px;top:199.23px;font-size:14.5px;line-height:14.5px;color:#ffffff;font-weight:700;">PSU</div>
<div class="t " style="left:1448.60px;top:220.26px;font-size:16px;line-height:16px;color:#ffffff;transform:scaleX(1.0152);transform-origin:0 0;-webkit-text-stroke:0.35px #fff;">Voltage (V)</div>
<div class="t " style="left:1544.00px;top:197.64px;font-size:18.5px;line-height:18.5px;color:#ffffff;font-weight:700;transform:scaleX(0.9230);transform-origin:0 0;">Fan Speed</div>
<div class="t " style="left:1551.75px;top:220.76px;font-size:16px;line-height:16px;color:#ffffff;transform:scaleX(0.9721);transform-origin:0 0;-webkit-text-stroke:0.35px #fff;">(% / RPM)</div>
<div class="t " style="left:1790.10px;top:187.14px;font-size:18.5px;line-height:18.5px;color:#ffffff;font-weight:700;transform:scaleX(1.0365);transform-origin:0 0;">Disk1</div>
<svg class="a" style="left:1847px;top:192px" width="11" height="12" viewBox="0 0 11 12"><path d="M1.5 2 L9.5 2 L5.5 10 Z" fill="none" stroke="#fff" stroke-width="1.6" stroke-linejoin="round"/></svg>
<div class="a" style="left:1640px;top:217px;width:120.5px;height:35px;overflow:hidden;">
<div class="t " style="left:1.60px;top:8.18px;font-size:15.5px;line-height:15.5px;color:#ffffff;transform:scaleX(1.0249);transform-origin:0 0;-webkit-text-stroke:0.35px #fff;">Temperature (&#176;C)</div>
</div>
<div class="t " style="left:1770.25px;top:225.18px;font-size:15.5px;line-height:15.5px;color:#ffffff;transform:scaleX(0.9845);transform-origin:0 0;-webkit-text-stroke:0.35px #fff;">Health (% )</div>
<div class="t " style="left:1876.00px;top:225.18px;font-size:15.5px;line-height:15.5px;color:#ffffff;transform:scaleX(0.9729);transform-origin:0 0;-webkit-text-stroke:0.35px #fff;">Disk (%)</div>
<div class="a" style="left:407px;top:392px;width:70px;height:31px;background:#787878;border-radius:5px;"></div>
<div class="t " style="left:417.70px;top:399.90px;font-size:15px;line-height:15px;color:#fff;font-weight:700;transform:scaleX(0.9123);transform-origin:0 0;">Spine-2</div>
<svg class="a" style="left:422px;top:364px" width="26" height="30" viewBox="0 0 26 30"><path d="M7 3.5 c0-1.3 2.6-1.3 2.6 0 v9 c0-1.3 2.6-1.3 2.6 0 v1 c0-1.3 2.6-1.3 2.6 0 v1 c0-1.3 2.6-1.3 2.6 0 v6 c0 3-2 6-5 6 h-3 c-2 0 -3 -1 -4 -2.5 l-4-6 c-0.8-1.2 0.8-2.5 2-1.5 l2.2 2 Z" fill="#fff" stroke="#222" stroke-width="1.4" stroke-linejoin="round"/><path d="M12.2 14 v4 M14.8 15 v3.5 M17.4 16 v3" stroke="#222" stroke-width="0.9"/></svg>
<div class="t " style="left:1504.30px;top:1006.87px;font-size:20px;line-height:20px;color:#333;transform:scaleX(0.9029);transform-origin:0 0;">Rows per page:</div>
<div class="t " style="left:1653.20px;top:1006.87px;font-size:20px;line-height:20px;color:#333;transform:scaleX(0.8784);transform-origin:0 0;">10</div>
<svg class="a" style="left:1681px;top:1013px" width="16" height="9" viewBox="0 0 16 9"><path d="M1.5 1.5 L14 1.5 L7.75 8 Z" fill="#666"/></svg>
<div class="t " style="left:1747.60px;top:1006.87px;font-size:20px;line-height:20px;color:#333;transform:scaleX(0.9514);transform-origin:0 0;">1&#8211;10 of 12</div>
<svg class="a" style="left:1882px;top:1007px" width="16" height="20" viewBox="0 0 16 20"><path d="M12 2.5 L5 10 L12 17.5" fill="none" stroke="#c4c4c4" stroke-width="2.4" stroke-linecap="round" stroke-linejoin="round"/></svg>
<svg class="a" style="left:1933px;top:1007px" width="18" height="20" viewBox="0 0 18 20"><path d="M5 2.5 L12 10 L5 17.5" fill="none" stroke="#222" stroke-width="2.6" stroke-linecap="round" stroke-linejoin="round"/></svg>
<div class="a" style="left:372px;top:1049px;width:1611px;height:16px;background:#fafafa;"></div>
<svg class="a" style="left:377px;top:1054px" width="12" height="11" viewBox="0 0 12 11"><path d="M10.5 1 L10.5 11 L2 6 Z" fill="#8a8a8a" stroke="#8a8a8a" stroke-linejoin="round"/></svg>
<div class="a" style="left:1983px;top:0px;width:16px;height:1065px;background:#fbfbfb;"></div>
<svg class="a" style="left:1986px;top:0px" width="13" height="8" viewBox="0 0 13 8"><path d="M1 7 L7 0.5 L13 7 Z" fill="#8a8a8a" stroke="#8a8a8a" stroke-linejoin="round"/></svg>
<svg class="a" style="left:1986px;top:1035px" width="13" height="10" viewBox="0 0 13 10"><path d="M1 1 L13 1 L7 9 Z" fill="#8a8a8a" stroke="#8a8a8a" stroke-linejoin="round"/></svg>
<svg class="a" style="left:1968px;top:1054px" width="12" height="11" viewBox="0 0 12 11"><path d="M1.5 1 L1.5 11 L10 6 Z" fill="#8a8a8a" stroke="#8a8a8a" stroke-linejoin="round"/></svg>
</body></html>
